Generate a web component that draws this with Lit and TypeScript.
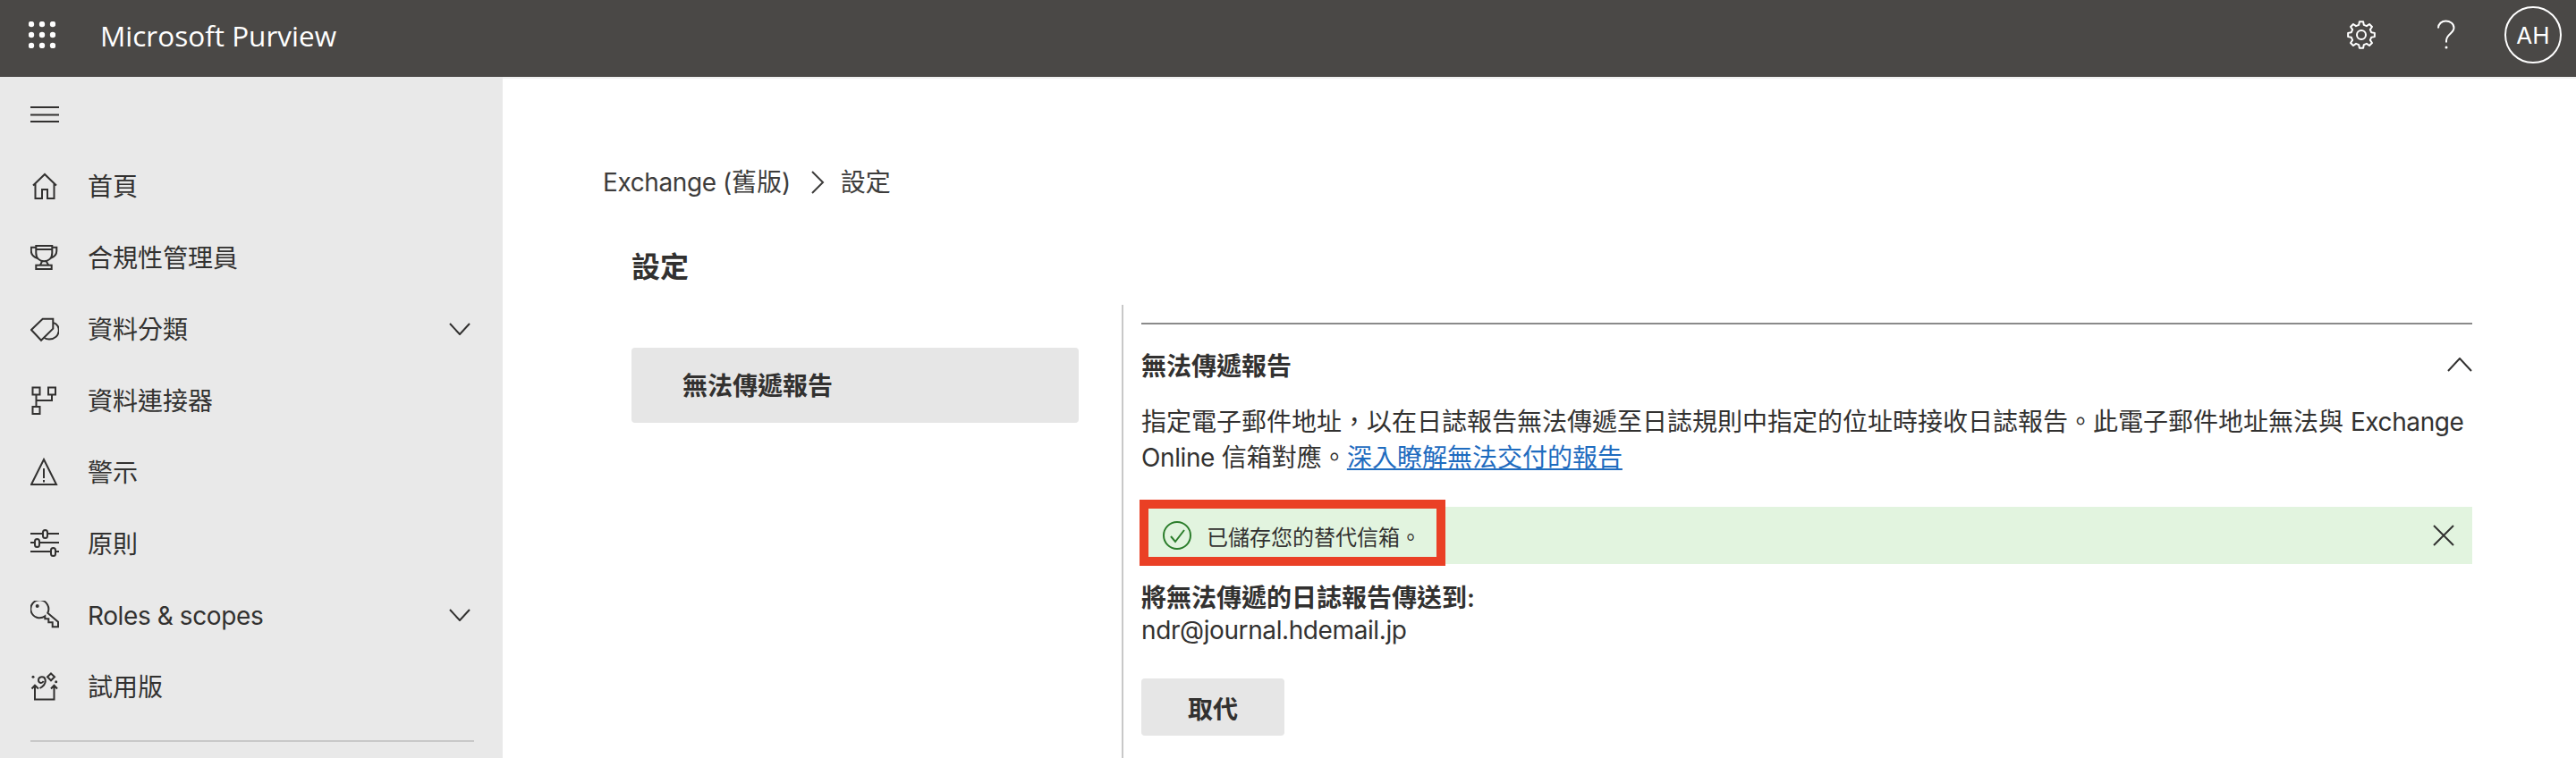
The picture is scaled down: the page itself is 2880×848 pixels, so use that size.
import { LitElement, html, css, svg } from "lit";
import { customElement } from "lit/decorators.js";

const gearPath = (() => {
  const pts: string[] = [];
  const teeth = 8;
  for (let i = 0; i < teeth; i++) {
    const a = (i * 2 * Math.PI) / teeth - Math.PI / 2;
    const w = Math.PI / teeth;
    const p = (r: number, t: number) => `${(16 + r * Math.cos(t)).toFixed(2)} ${(16 + r * Math.sin(t)).toFixed(2)}`;
    pts.push(p(11.5, a - w * 0.62), p(15, a - w * 0.36), p(15, a + w * 0.36), p(11.5, a + w * 0.62));
  }
  return "M" + pts.join(" L") + " Z";
})();

const navIcons: Record<string, unknown> = {
  home: svg`<path d="M3 15.5 16 3l13 12.5M5.5 13.5V30H13V20h6v10h7.5V13.5"/>`,
  trophy: svg`<path d="M6.3 3h18v8c0 6-4 9.3-9 9.3s-9-3.3-9-9.300zM6.3 7h18M6.3 4.700H.8v4C.8 12.5 3.5 15.5 8 17M24.3 4.700h5v4c0 3.800-2.500 6.800-7 8.300M13 20.300l-2 4.400M17.700 20.300l2.600 4.400"/><rect x="6.3" y="24.7" width="17.4" height="4.3"/>`,
  tag: svg`<path d="M25.3 4.7H13.7L1 17l11 11.7 13.3-13z"/><path d="M25.3 9C35 11 34 27 21 27.5c-2 0-4-.5-5.500-1.500"/>`,
  conn: svg`<rect x="2.5" y="1.5" width="8" height="8"/><rect x="20" y="1.5" width="8" height="8"/><rect x="2.5" y="23" width="8" height="8"/><path d="M6.5 9.5V23M6.5 16H24V9.5"/>`,
  warn: svg`<path d="M15 2 29 30H1ZM15 12v11M15 25v2.5"/>`,
  sliders: svg`<path d="M0 5h14M19 5h13M0 15h5M10 15h22M0 25h23M28 25h4"/><rect x="14" y="1" width="5" height="9" rx="2.5"/><rect x="5" y="11" width="5" height="9" rx="2.5"/><rect x="23" y="21" width="5" height="9" rx="2.5"/>`,
  key: svg`<path d="M19.3 13.7 31 23.700V29.300H24.700V24.300H20.300V20.300H16.300V17.300A10 10 0 1 1 19.300 13.700Z"/><circle cx="7.7" cy="6" r="2" fill="currentColor" stroke="none"/>`,
  trial: svg`<path d="M5 15v15.5h21.5V15M1.5 18.5 5 14.700l4 3.800M23 18.5l3.5-3.800 3.500 3.800M10.500 18c4.500-2.500 7-6 6-10s-7.500-3.500-7.500 1c0 3.500 4.500 4 5.500 1"/><path d="M23 1.5 27 5.3 23 9.3 19 5.3z"/><circle cx="3" cy="5.3" r="1.5" fill="currentColor" stroke="none"/><circle cx="28.7" cy="10.7" r="1.5" fill="currentColor" stroke="none"/>`,
};

const items = [
  { icon: "home", label: "首頁" },
  { icon: "trophy", label: "合規性管理員" },
  { icon: "tag", label: "資料分類", chev: true },
  { icon: "conn", label: "資料連接器" },
  { icon: "warn", label: "警示" },
  { icon: "sliders", label: "原則" },
  { icon: "key", label: "Roles & scopes", chev: true, lat: true },
  { icon: "trial", label: "試用版" },
];

@customElement("app-root")
export class AppRoot extends LitElement {
  static styles = css`
    :host {
      display: block;
      width: 2880px;
      height: 848px;
      overflow: hidden;
      background: #fff;
      color: #323130;
      font-family: Inter, "Noto Sans CJK TC", sans-serif;
      font-size: 28px;
    }
    svg { display: block; flex: none; fill: none; stroke: currentColor; stroke-width: 2; }
    .lat { letter-spacing: -0.4px; }
    .top {
      height: 86px;
      background: #4a4846;
      color: #fff;
      display: flex;
      align-items: center;
      padding: 0 16px 8px 32px;
      box-sizing: border-box;
    }
    .waffle { fill: #fff; stroke: none; }
    .brand {
      font-family: "Open Sans", sans-serif;
      font-size: 31.5px;
      font-weight: 500;
      margin-left: 50px;
      flex: 1;
      white-space: nowrap;
    }
    .help { width: 32px; margin-left: 63px; margin-right: 49px; }
    .avatar {
      width: 64px;
      height: 64px;
      box-sizing: border-box;
      border: 2px solid #fff;
      border-radius: 50%;
      display: flex;
      align-items: center;
      justify-content: center;
      font-size: 26px;
    }
    .body { display: flex; height: 762px; }
    .side {
      width: 562px;
      flex: none;
      background: #e9e9e9;
      box-sizing: border-box;
      padding: 22px 32px 0 34px;
    }
    .burger { height: 40px; display: flex; align-items: center; }
    .nav { margin-top: 20px; }
    .row { height: 80px; display: flex; align-items: center; padding-right: 4px; }
    .row span { margin-left: 32px; flex: 1; white-space: nowrap; padding-bottom: 3px; }
    .row span.lat { padding-bottom: 0; padding-top: 1px; }
    .rule { height: 2px; background: #c8c8c8; margin-top: 20px; }
    .main {
      flex: 1;
      border-top: 2px solid #f1f1f1;
      padding: 96px 0 0 112px;
      box-sizing: border-box;
    }
    .crumb { display: flex; align-items: center; height: 40px; line-height: 40px; color: #3d3c3b; }
    .crumb svg { margin: 0 18px 0 22px; }
    h1 {
      margin: 55px 0 22px 32px;
      font-size: 32px;
      line-height: 40px;
      font-weight: 700;
    }
    .cols { display: flex; margin-left: 32px; }
    .left { width: 500px; flex: none; margin-right: 48px; padding-top: 48px; }
    .tab {
      height: 84px;
      background: #e6e6e6;
      border-radius: 4px;
      display: flex;
      align-items: center;
      padding: 0 0 2px 57px;
      box-sizing: border-box;
      font-weight: 600;
    }
    .panel {
      width: 1488px;
      flex: none;
      border-left: 2px solid #c8c8c8;
      padding: 20px 0 40px 20px;
    }
    .hr { height: 2px; background: #8a8a8a; }
    .head {
      margin-top: 25px;
      height: 40px;
      display: flex;
      align-items: center;
      justify-content: space-between;
      font-weight: 600;
    }
    .desc { margin: 24px 0 35px; line-height: 40px; }
    a { color: #1f6cbf; text-decoration: underline; }
    .alert {
      position: relative;
      height: 64px;
      background: #e2f4df;
      display: flex;
      align-items: center;
      padding: 0 20px 0 24px;
      font-size: 24px;
    }
    .alert .msg { margin-left: 17px; flex: 1; }
    .ok { color: #2b7d2b; }
    .mark {
      position: absolute;
      left: -2px;
      top: -8px;
      width: 342px;
      height: 74px;
      box-sizing: border-box;
      border: 10px solid #ea4025;
    }
    .label { margin-top: 20px; line-height: 36px; font-weight: 600; }
    .mail { line-height: 36px; }
    .btn {
      margin-top: 36px;
      width: 160px;
      height: 64px;
      background: #e6e6e6;
      border-radius: 4px;
      display: flex;
      align-items: center;
      justify-content: center;
      padding-top: 2px;
      box-sizing: border-box;
      font-weight: 600;
    }
  `;

  render() {
    const dots = [3, 15, 27].flatMap((x) => [3, 15, 27].map((y) => svg`<circle cx=${x} cy=${y} r="3.2"/>`));
    return html`
      <div class="top">
        <svg class="waffle" width="30" height="30" viewBox="0 0 30 30">${dots}</svg>
        <div class="brand">Microsoft Purview</div>
        <svg width="32" height="32" viewBox="0 0 32 32">
          <path d=${gearPath} stroke-linejoin="round"/><circle cx="16" cy="16" r="5"/>
        </svg>
        <svg class="help" height="34" viewBox="0 0 32 34">
          <path d="M7 9.5C7 4.5 11 1.5 15.5 1.5S24.5 4.5 24.5 9c0 6.5-8.500 7-8.500 14.500v2"/>
          <circle cx="16" cy="31" r="1.5" fill="currentColor" stroke="none"/>
        </svg>
        <div class="avatar">AH</div>
      </div>
      <div class="body">
        <aside class="side">
          <div class="burger">
            <svg width="32" height="20" viewBox="0 0 32 20"><path d="M0 2h32M0 10.5h32M0 18h32"/></svg>
          </div>
          <div class="nav">
            ${items.map(
              (it) => html`<div class="row">
                <svg width="32" height="32" viewBox="0 0 32 32">${navIcons[it.icon]}</svg>
                <span class=${it.lat ? "lat" : ""}>${it.label}</span>
                ${it.chev
                  ? html`<svg width="24" height="14" viewBox="0 0 24 14"><path d="M1 1l11 12L23 1"/></svg>`
                  : ""}
              </div>`
            )}
          </div>
          <div class="rule"></div>
        </aside>
        <main class="main">
          <div class="crumb">
            <span><span class="lat">Exchange (</span>舊版<span class="lat">)</span></span>
            <svg width="16" height="28" viewBox="0 0 16 28"><path d="M2 2l12 12L2 26"/></svg>
            設定
          </div>
          <h1>設定</h1>
          <div class="cols">
            <div class="left"><div class="tab">無法傳遞報告</div></div>
            <div class="panel">
              <div class="hr"></div>
              <div class="head">
                無法傳遞報告
                <svg width="28" height="16" viewBox="0 0 28 16"><path d="M1 15 14 1l13 14"/></svg>
              </div>
              <div class="desc">
                指定電子郵件地址，以在日誌報告無法傳遞至日誌規則中指定的位址時接收日誌報告。此電子郵件地址無法與
                <span class="lat">Exchange Online</span> 信箱對應。<a href="#">深入瞭解無法交付的報告</a>
              </div>
              <div class="alert">
                <svg class="ok" width="32" height="32" viewBox="0 0 32 32">
                  <circle cx="16" cy="16" r="15"/><path d="M9 17l5 6 10-13"/>
                </svg>
                <span class="msg">已儲存您的替代信箱。</span>
                <svg width="24" height="24" viewBox="0 0 24 24"><path d="M1 1l22 22M23 1 1 23"/></svg>
                <div class="mark"></div>
              </div>
              <div class="label">將無法傳遞的日誌報告傳送到:</div>
              <div class="mail lat">ndr@journal.hdemail.jp</div>
              <div class="btn">取代</div>
            </div>
          </div>
        </main>
      </div>
    `;
  }
}
